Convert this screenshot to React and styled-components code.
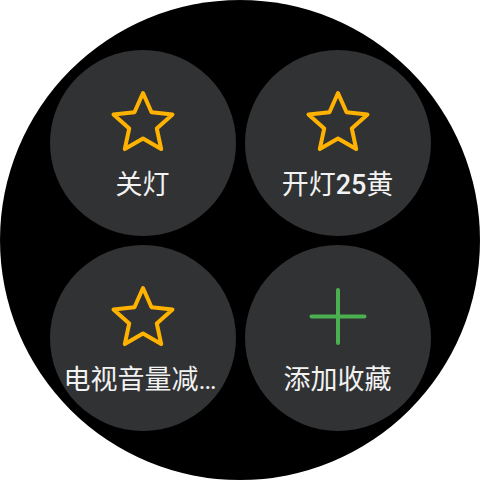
import React from "react";
import styled, { createGlobalStyle } from "styled-components";

const favorites = [
  { id: 1, label: "关灯", kind: "star" },
  { id: 2, label: "开灯25黄", kind: "star" },
  { id: 3, label: "电视音量减小", kind: "star" },
  { id: 4, label: "添加收藏", kind: "add" },
];

const starPoints = (() => {
  const cx = 34, cy = 35, R = 31, r = 14.5;
  const pts = [];
  for (let i = 0; i < 10; i++) {
    const rad = i % 2 === 0 ? R : r;
    const a = (Math.PI / 5) * i - Math.PI / 2;
    pts.push(`${(cx + rad * Math.cos(a)).toFixed(2)},${(cy + rad * Math.sin(a)).toFixed(2)}`);
  }
  return pts.join(" ");
})();

const StarIcon = () => (
  <svg width="68" height="64" viewBox="0 0 68 64">
    <polygon
      points={starPoints}
      fill="none"
      stroke="#ffb300"
      strokeWidth="4"
      strokeLinejoin="round"
    />
  </svg>
);

const PlusIcon = () => (
  <svg width="68" height="64" viewBox="0 0 68 64">
    <path
      d="M34 6 V59 M7.5 32.5 H60.5"
      stroke="#4caf50"
      strokeWidth="4"
      strokeLinecap="round"
      fill="none"
    />
  </svg>
);

// digits render in Roboto Medium, like the watch's system font
const renderLabel = (text) =>
  text.split(/(\d+)/).map((part, i) =>
    /^\d+$/.test(part) ? <Num key={i}>{part}</Num> : part
  );

const App = () => {
  return (
    <>
      <GlobalStyle />
      <Watch>
        <Grid>
          {favorites.map((f) => (
            <Tile key={f.id}>
              <IconSlot>{f.kind === "star" ? <StarIcon /> : <PlusIcon />}</IconSlot>
              <Label>{renderLabel(f.label)}</Label>
            </Tile>
          ))}
        </Grid>
      </Watch>
    </>
  );
};

export default App;

// style component

const GlobalStyle = createGlobalStyle`
  html, body {
    margin: 0;
    padding: 0;
    background: #ffffff;
  }
`;

const Watch = styled.div`
  width: 480px;
  height: 480px;
  border-radius: 50%;
  background: #000000;
  display: flex;
  align-items: center;
  justify-content: center;
`;

const Grid = styled.div`
  display: grid;
  grid-template-columns: 186px 186px;
  grid-template-rows: 186px 186px;
  gap: 9px;
`;

const Tile = styled.div`
  width: 186px;
  height: 186px;
  border-radius: 50%;
  background: #313234;
  display: flex;
  flex-direction: column;
  align-items: center;
  padding-top: 39px;
  box-sizing: border-box;
`;

const IconSlot = styled.div`
  width: 68px;
  height: 64px;
  display: flex;
  svg {
    display: block;
  }
`;

const Label = styled.div`
  margin-top: 16px;
  max-width: 158px;
  color: #f2f2f2;
  font-family: Roboto, "Noto Sans CJK SC", sans-serif;
  font-size: 27px;
  line-height: 32px;
  white-space: nowrap;
  overflow: hidden;
  text-overflow: ellipsis;
  text-align: center;
`;

const Num = styled.span`
  font-weight: 500;
`;
